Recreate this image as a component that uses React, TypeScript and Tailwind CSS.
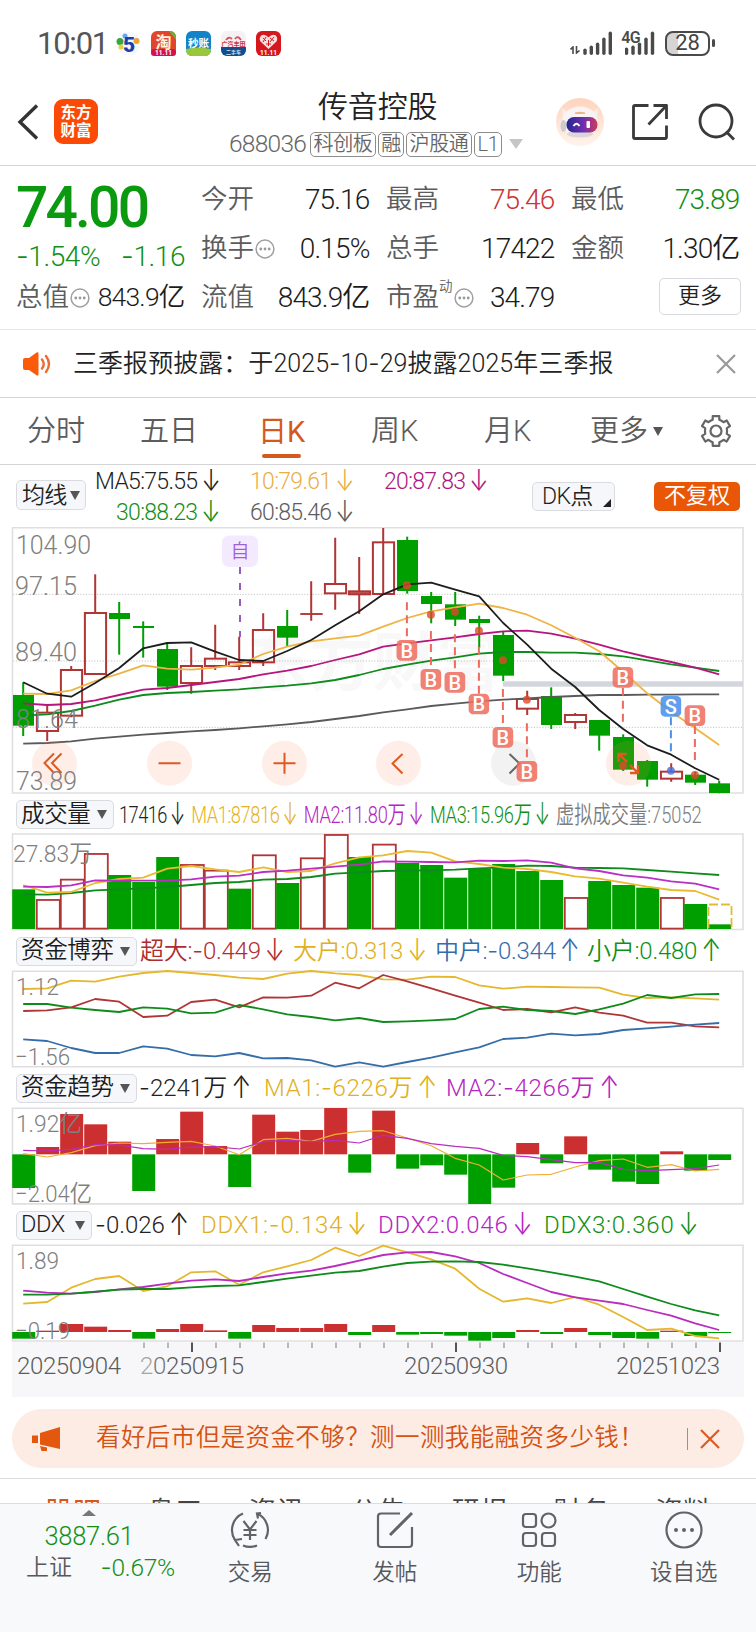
import React from 'react';

const RED = '#b03535';
const BARRED = '#cc2f2f';
const GREEN = '#009f00';
const cx = (i: number) => 23.2 + 24 * i;

function T({ t, className = '' }: { t: string; className?: string }) {
  return (
    <span className={`inline-block whitespace-nowrap tracking-[-0.03em] ${className}`}>
      {t.split(/([-↑↓])/).map((p, i) =>
        p === '-' ? (
          <span key={i} className="font-['Inter']">-</span>
        ) : p === '↑' || p === '↓' ? (
          <span key={i} className="ml-[4px] inline-block w-[16px] scale-y-[1.3] text-center font-['Inter'] font-light tracking-normal">{p}</span>
        ) : (
          p
        ),
      )}
    </span>
  );
}

function Line({ ys, base, color, w = 1.8 }: { ys: number[]; base: number; color: string; w?: number }) {
  return (
    <polyline
      fill="none"
      stroke={color}
      strokeWidth={w}
      strokeLinejoin="round"
      points={ys.map((y, i) => `${cx(i)},${(base + y / 3).toFixed(1)}`).join(' ')}
    />
  );
}

function Caret({ className = '' }: { className?: string }) {
  return (
    <svg viewBox="0 0 10 9" className={`h-[9px] w-[10px] shrink-0 ${className}`}>
      <path d="M0 0h10L5 9z" fill="currentColor" />
    </svg>
  );
}

function Lab({ x, y, len, children, size = 25 }: { x: number; y: number; len: number; size?: number; children: string }) {
  return (
    <text x={x} y={y} fontSize={size} textLength={len} lengthAdjust="spacingAndGlyphs" fill="#808080">
      {children}
    </text>
  );
}

function Frame({ top, bottom }: { top: number; bottom: number }) {
  return (
    <path
      d={`M12.5 ${top}H743V${bottom}H12.5z`}
      fill="none"
      stroke="#dfdfe1"
      strokeWidth="1.6"
    />
  );
}

const candles: [number, number, number, number, number][] = [
  [0, 525, 617, 487, 648], [1, 578, 633, 555, 663], [1, 450, 587, 438, 592], [1, 279, 462, 163, 462],
  [0, 279, 297, 246, 404], [0, 318, 324, 304, 413], [0, 387, 500, 369, 510], [1, 438, 489, 382, 521],
  [1, 416, 438, 314, 450], [1, 427, 438, 350, 450], [1, 330, 427, 280, 438], [0, 318, 353, 270, 379],
  [1, 281, 283, 184, 302], [1, 192, 220, 53, 269], [1, 214, 223, 111, 282], [1, 67, 222, 24, 67],
  [0, 60, 213, 50, 221], [0, 228, 252, 216, 310], [0, 253, 299, 216, 318], [0, 297, 309, 287, 383],
  [0, 345, 467, 333, 483], [1, 537, 566, 512, 585], [0, 528, 615, 502, 627], [1, 585, 606, 579, 627],
  [0, 600, 647, 600, 692], [0, 651, 749, 643, 753], [0, 723, 779, 720, 800], [1, 755, 776, 730, 785],
  [0, 764, 788, 755, 795], [0, 790, 819, 782, 820],
];
const ma5 = [487, 521, 530, 489, 444, 385, 369, 367, 395, 420, 423, 393, 360, 316, 274, 223, 193, 188, 209, 229, 309, 374, 446, 501, 570, 627, 676, 704, 745, 779];
const ma10 = [521, 522, 511, 483, 461, 436, 446, 449, 443, 434, 402, 380, 364, 355, 347, 320, 294, 274, 262, 251, 264, 284, 316, 353, 394, 455, 520, 575, 625, 675];
const ma20 = [550, 555, 552, 541, 525, 509, 504, 495, 486, 477, 463, 452, 438, 420, 403, 380, 370, 361, 352, 342, 334, 332, 341, 356, 374, 394, 411, 426, 443, 463];
const ma30 = [587, 583, 573, 557, 539, 525, 519, 516, 512, 508, 502, 497, 490, 480, 465, 447, 434, 422, 412, 401, 396, 396, 398, 398, 402, 409, 421, 433, 443, 453];
const ma60 = [671, 669, 664, 656, 650, 644, 639, 634, 630, 625, 619, 613, 606, 597, 588, 577, 568, 558, 551, 544, 539, 535, 531, 528, 525, 525, 524, 524, 523, 523];

// index, letter, badge centre, dash start, dash end, dot centre
const marks: [number, string, number, number, number, number][] = [
  [16, 'B', 391, 247, 360, 196], [17, 'B', 478, 333, 448, 284], [18, 'B', 487, 343, 457, 275],
  [19, 'B', 552, 380, 522, 332], [20, 'B', 652, 507, 620, 421], [21, 'B', 754, 610, 722, 539],
  [25, 'B', 472, 503, 615, 737], [27, 'S', 559, 592, 705, 752], [28, 'B', 587, 618, 735, 765],
];

function MainChart() {
  const Y = (v: number) => 520 + v / 3;
  return (
    <svg viewBox="0 525 756 272" className="block h-[272px] w-[756px]">
      <text x="246" y="685" fontSize="64" fontWeight="700" fill="#f8f8f8" textLength="254">东方财富</text>
      {[223, 423, 622].map((v) => (
        <path key={v} d={`M13 ${Y(v)}H743`} stroke="#c4c4c4" strokeWidth="1" strokeDasharray="1.2 1.6" />
      ))}
      <Frame top={527.7} bottom={793} />
      <rect x="503" y="681.3" width="240" height="5.4" fill="#d3d6dc" />
      {candles.map(([up, a, b, h, l], i) => {
        const x = cx(i);
        const c = up ? RED : GREEN;
        return (
          <g key={i}>
            <path d={up ? `M${x} ${Y(h)}V${Y(a)}M${x} ${Y(b)}V${Y(l)}` : `M${x} ${Y(h)}V${Y(l)}`} stroke={c} strokeWidth="2" />
            {up ? (
              <rect x={x - 10.3} y={Y(a)} width="21.2" height={Y(b) - Y(a)} fill="none" stroke={c} strokeWidth={i === 12 ? 1.2 : 2} />
            ) : (
              <rect x={x - 10.2} y={Y(a)} width="21" height={Y(b) - Y(a)} fill={c} />
            )}
          </g>
        );
      })}
      <rect x={cx(14) - 10} y={Y(214)} width="21" height="3" fill={RED} opacity=".8" />
      <Line ys={ma60} base={520} color="#5a5a5a" />
      <Line ys={ma30} base={520} color="#0f8a1c" />
      <Line ys={ma20} base={520} color="#b5157d" />
      <Line ys={ma10} base={520} color="#efb443" />
      <Line ys={ma5} base={520} color="#1d1d1d" />
      <path d="M240 567V637" stroke="#9a5cc4" strokeWidth="2" strokeDasharray="7 9" />
      <rect x="222" y="535.5" width="36" height="31.5" rx="7" fill="#f4eaff" />
      <text x="240" y="558" fontSize="19" textAnchor="middle" fill="#a25fd6">自</text>
      <Lab x={16} y={553.5} len={75}>104.90</Lab>
      <Lab x={15} y={594.5} len={62}>97.15</Lab>
      <Lab x={15} y={660.5} len={62}>89.40</Lab>
      <Lab x={16} y={727.5} len={62}>81.64</Lab>
      {[54.5, 169.5, 284.5, 398.5, 513.5, 628.5].map((x, i) => (
        <circle key={x} cx={x} cy="763.3" r="22.5" fill={i === 4 ? '#999' : '#f58a52'} opacity={i === 4 ? 0.13 : 0.14} />
      ))}
      <g fill="none" stroke="#dd5a22" strokeWidth="2">
        <path d="M54 753.5l-9.5 9.5 9.5 10M61.5 753.5l-9.5 9.5 9.5 10" />
        <path d="M158.500 763.300h22M273.500 763.300h22M284.500 752.800v21" />
        <path d="M402.500 754l-10 9.500 10 10" />
        <path d="M618.500 762v-8h8M619 754l8 8M638 765v8h-8M638 773l-8-8" strokeWidth="2.400" />
      </g>
      <path d="M509.500 754l10 9.500-10 10" fill="none" stroke="#666" strokeWidth="2" />
      <Lab x={16} y={789.5} len={61}>73.89</Lab>
      {marks.map(([i, s, by, y1, y2, dot]) => {
        const blue = s === 'S';
        const x = cx(i) - 0.3;
        return (
          <g key={i}>
            <path d={`M${x} ${Y(y1)}V${Y(y2)}`} stroke={blue ? '#4f8fe0' : '#ec6a5e'} strokeWidth="2" strokeDasharray="8 5" />
            <circle cx={x} cy={Y(dot)} r="4" fill={blue ? '#4a6fe0' : '#e2472c'} opacity=".8" />
            <rect x={x - 10.3} y={Y(by) - 10.3} width="20.6" height="20.6" rx="4.500" fill={blue ? '#4b92ec' : '#ee6f61'} opacity=".88" />
            <text x={x} y={Y(by) + 7.3} fontSize="20" fontWeight="500" textAnchor="middle" fill="#fff">{s}</text>
          </g>
        );
      })}
    </svg>
  );
}

const vol: [number, number][] = [
  [0, 268], [1, 299], [1, 238], [1, 161], [0, 225], [0, 246], [0, 171], [1, 194], [1, 211], [0, 266],
  [1, 165], [0, 249], [1, 174], [1, 104], [0, 171], [1, 133], [0, 189], [0, 195], [0, 233], [0, 206],
  [0, 192], [0, 213], [0, 240], [1, 293], [0, 243], [0, 255], [0, 263], [1, 293], [0, 312], [0, 373],
];
const v1 = [255, 278, 276, 249, 237, 233, 206, 198, 208, 216, 202, 216, 213, 190, 172, 166, 153, 158, 184, 192, 203, 207, 216, 229, 236, 248, 260, 270, 273, 299];
const v2 = [260, 261, 256, 241, 242, 242, 242, 238, 230, 227, 216, 212, 206, 200, 194, 184, 185, 186, 187, 182, 183, 181, 188, 205, 213, 226, 233, 244, 251, 268];
const v3 = [283, 284, 279, 271, 268, 265, 261, 255, 249, 246, 239, 237, 231, 221, 217, 213, 212, 211, 209, 205, 202, 197, 198, 203, 204, 205, 210, 215, 220, 225];

function VolumeChart() {
  return (
    <svg viewBox="0 832 756 100" className="block h-[100px] w-[756px]">
      <Frame top={834} bottom={929.5} />
      {vol.map(([up, y], i) =>
        up ? (
          <rect key={i} x={12.8 + 24 * i} y={800.3 + y / 3} width="23" height={128.3 - y / 3} fill="none" stroke={RED} strokeWidth="1.8" />
        ) : (
          <rect key={i} x={12.2 + 24 * i} y={800 + y / 3} width="23" height={129 - y / 3} fill={GREEN} />
        ),
      )}
      <path d="M708.500 928V904.500H731.500V928" fill="none" stroke="#e2bb35" strokeWidth="1.800" strokeDasharray="9 3" />
      <Line ys={v3} base={800} color="#0f8a1c" />
      <Line ys={v1} base={800} color="#e9bb32" />
      <Line ys={v2} base={800} color="#bb2fc4" />
      <Lab x={13} y={862} len={79} size={24}>27.83万</Lab>
    </svg>
  );
}

const g1 = [567, 565, 542, 545, 530, 519, 513, 519, 525, 533, 537, 521, 513, 520, 525, 538, 539, 530, 531, 556, 566, 560, 561, 562, 563, 584, 594, 592, 595, 599];
const g2 = [633, 631, 622, 597, 605, 651, 647, 606, 599, 622, 592, 593, 587, 548, 565, 525, 544, 565, 587, 608, 630, 627, 637, 622, 638, 647, 668, 668, 679, 682];
const g3 = [612, 612, 623, 630, 636, 622, 626, 640, 638, 615, 628, 643, 651, 661, 654, 666, 664, 661, 657, 627, 620, 630, 633, 642, 628, 611, 585, 594, 583, 582];
const g4 = [718, 723, 744, 759, 759, 739, 746, 765, 769, 759, 775, 774, 781, 800, 787, 800, 786, 773, 757, 742, 717, 713, 701, 706, 702, 690, 685, 680, 674, 669];

function FlowChart() {
  return (
    <svg viewBox="0 969 756 100" className="block h-[100px] w-[756px]">
      <Frame top={971.3} bottom={1066.7} />
      <Line ys={g1} base={800} color="#e5b72d" />
      <Line ys={g2} base={800} color="#b03535" />
      <Line ys={g3} base={800} color="#0f8a1c" />
      <Line ys={g4} base={800} color="#356da8" />
      <Lab x={16} y={995} len={43} size={24}>1.12</Lab>
      <Lab x={15} y={1065} len={55} size={24}>−1.56</Lab>
    </svg>
  );
}

const trend: [number, number][] = [
  [0, 324], [1, 201], [1, 102], [1, 133], [1, 185], [0, 333], [1, 177], [1, 95], [1, 198], [0, 321],
  [1, 104], [1, 155], [1, 150], [1, 84], [0, 278], [1, 92], [0, 266], [0, 256], [0, 284], [0, 372],
  [0, 323], [1, 189], [0, 250], [1, 169], [0, 269], [0, 305], [0, 312], [1, 214], [0, 272], [0, 240],
];
const t1 = [221, 231, 218, 197, 189, 191, 187, 184, 198, 224, 179, 175, 184, 163, 154, 152, 174, 197, 235, 255, 300, 285, 283, 261, 242, 237, 262, 254, 273, 268];
const t2 = [211, 213, 208, 194, 195, 206, 208, 201, 200, 207, 185, 181, 185, 181, 189, 166, 175, 191, 199, 205, 226, 230, 239, 248, 247, 268, 272, 269, 266, 255];

function Bars({ data, zero }: { data: [number, number][]; zero: number }) {
  return (
    <>
      {data.map(([up, v], i) => (
        <rect
          key={i}
          x={12.2 + 24 * i}
          y={1080 + Math.min(v, zero) / 3}
          width="23"
          height={Math.abs(v - zero) / 3}
          fill={up ? BARRED : GREEN}
        />
      ))}
    </>
  );
}

function TrendChart() {
  return (
    <svg viewBox="0 1106 756 100" className="block h-[100px] w-[756px]">
      <Frame top={1108.300} bottom={1203.900} />
      <Bars data={trend} zero={223} />
      <Line ys={t1} base={1080} color="#f0ae30" w={1.2} />
      <Line ys={t2} base={1080} color="#b92cc0" w={1.2} />
      <Lab x={16} y={1132} len={66} size={24}>1.92亿</Lab>
      <Lab x={15} y={1202} len={77} size={24}>−2.04亿</Lab>
    </svg>
  );
}

const ddx: [number, number][] = [
  [0, 776], [1, 752], [1, 732], [1, 740], [1, 750], [0, 776], [1, 747], [1, 732], [1, 751], [0, 776],
  [1, 735], [1, 744], [1, 744], [1, 732], [0, 765], [1, 735], [0, 764], [0, 762], [0, 767], [0, 782],
  [0, 774], [1, 750], [0, 762], [1, 744], [0, 765], [0, 774], [0, 776], [1, 752], [0, 768], [0, 759],
];
const d1 = [671, 666, 623, 597, 588, 633, 619, 577, 574, 614, 577, 559, 540, 503, 528, 497, 517, 538, 566, 626, 665, 655, 669, 651, 674, 711, 750, 746, 768, 775];
const d2 = [632, 638, 641, 636, 628, 621, 611, 602, 598, 603, 591, 580, 572, 558, 542, 525, 517, 516, 529, 549, 582, 609, 636, 652, 662, 672, 690, 707, 730, 750];
const d3 = [644, 644, 641, 635, 629, 627, 627, 622, 618, 616, 606, 596, 587, 578, 573, 560, 549, 545, 544, 546, 554, 565, 577, 590, 604, 627, 650, 672, 691, 706];

function DdxChart() {
  return (
    <svg viewBox="0 1243 756 154" className="block h-[154px] w-[756px]">
      <rect x="12" y="1342" width="732" height="55" fill="#f7f7fa" />
      <Frame top={1245.300} bottom={1341} />
      <Bars data={ddx} zero={756} />
      <Line ys={d1} base={1080} color="#e5b72d" />
      <Line ys={d2} base={1080} color="#b92cc0" />
      <Line ys={d3} base={1080} color="#0f8a1c" />
      <Lab x={16} y={1269} len={43} size={24}>1.89</Lab>
      <Lab x={15} y={1339} len={55} size={24}>−0.19</Lab>
      {Array.from({ length: 25 }, (_, k) => k + 5).map((i) => {
        const big = i === 7 || i === 18 || i === 29;
        return (
          <path key={i} d={`M${cx(i) + 0.8} 1342.500v${big ? 9.500 : 5.500}`} stroke={big ? '#555' : '#a8a8a8'} strokeWidth={big ? 2 : 1.600} />
        );
      })}
      <g fontSize="24" fill="#5c5c5c">
        <text x="17" y="1374" textLength="104">20250904</text>
        <text x="140" y="1374" textLength="104"><tspan fill="#a5a5a5">2</tspan><tspan fill="#777">0</tspan>250915</text>
        <text x="404" y="1374" textLength="104">20250930</text>
        <text x="616" y="1374" textLength="104">20251023</text>
      </g>
    </svg>
  );
}

function Pick({ t, className }: { t: string; className: string }) {
  return (
    <div className={`flex h-[29px] shrink-0 items-center justify-between rounded-[5px] border border-[#d9dbe0] bg-[#f6f7fa] pl-[4px] pr-[6px] text-[23.5px] text-[#1c1c1c] ${className}`}>
      <T t={t} className="!tracking-[-0.015em]" />
      <Caret className="text-[#555]" />
    </div>
  );
}

function Dots() {
  return (
    <svg viewBox="0 0 20 20" className="ml-[1px] h-[20px] w-[20px]">
      <circle cx="10" cy="10" r="8.900" fill="none" stroke="#a0a0a0" strokeWidth="1.500" />
      <g fill="#999"><circle cx="5.800" cy="10" r="1.400" /><circle cx="10" cy="10" r="1.400" /><circle cx="14.200" cy="10" r="1.400" /></g>
    </svg>
  );
}

function Cell({ k, v, dots, sup, className = '', vc = 'text-[#1c1c1c]', vs = 'text-[28px]' }: { k: string; v: string; dots?: boolean; sup?: string; className?: string; vc?: string; vs?: string }) {
  return (
    <div className={`flex h-[49px] items-center justify-between ${className}`}>
      <div className="flex items-center whitespace-nowrap text-[26.500px] text-[#5c5c5c]">
        {k}
        {sup && <span className="mb-[22px] text-[13.500px]">{sup}</span>}
        {dots && <Dots />}
      </div>
      <T t={v} className={`mr-[0.5px] ${vs} ${vc}`} />
    </div>
  );
}

function Tag({ t, className }: { t: string; className: string }) {
  return (
    <span className={`flex h-[25px] items-center justify-center whitespace-nowrap rounded-[5px] border-[1.500px] border-[#8c8c8c] text-[20px] tracking-[-0.02em] ${className}`}>{t}</span>
  );
}

export default function App() {
  return (
    <div className="flex h-[1632px] w-[756px] flex-col overflow-hidden bg-white font-['Roboto','Noto_Sans_CJK_SC',sans-serif] font-[350] leading-none text-[#222]">
      {/* status bar */}
      <div className="flex h-[86px] items-center pl-[37px] pr-[41px]">
        <T t="10:01" className="w-[79px] text-[31px] font-normal !tracking-[-0.04em] text-[#555]" />
        <div className="flex gap-[10px]">
          <svg viewBox="0 0 25 25" className="h-[25px] w-[25px]">
            <circle cx="12.500" cy="12.500" r="12" fill="#f7f8fc" />
            <circle cx="4" cy="10.500" r="3.500" fill="#35a83c" />
            <circle cx="9" cy="5" r="2.500" fill="#6aa5ef" />
            <circle cx="20.500" cy="10" r="3" fill="#f0a12c" />
            <circle cx="5" cy="16" r="2.500" fill="#e5d23a" />
            <text x="13" y="20.500" fontSize="21" fontWeight="900" textAnchor="middle" fill="#1c3fae">5</text>
          </svg>
          <svg viewBox="0 0 25 25" className="h-[25px] w-[25px]">
            <rect width="25" height="25" rx="6" fill="#e2452e" />
            <path d="M18 0h1a6 6 0 0 1 6 6v3z" fill="#6fae3a" />
            <rect y="18" width="25" height="7" rx="3" fill="#d3124e" />
            <text x="12.500" y="17" fontSize="16" fontWeight="700" textAnchor="middle" fill="#fff3d8">淘</text>
            <text x="12.500" y="24" fontSize="6.500" fontWeight="700" textAnchor="middle" fill="#fff">11.11</text>
          </svg>
          <svg viewBox="0 0 25 25" className="h-[25px] w-[25px]">
            <rect width="25" height="25" rx="6" fill="#1283c6" />
            <path d="M0 18Q12 15 25 18v1a6 6 0 0 1-6 6H6a6 6 0 0 1-6-6z" fill="#9ac63c" />
            <text x="12.500" y="15.500" fontSize="10.500" fontWeight="700" textAnchor="middle" fill="#fff">秒账</text>
          </svg>
          <svg viewBox="0 0 25 25" className="h-[25px] w-[25px]">
            <rect width="25" height="25" rx="6" fill="#f4f2f3" />
            <path d="M0 16h25v3a6 6 0 0 1-6 6H6a6 6 0 0 1-6-6z" fill="#124d8c" />
            <path d="M5 9q3-4 6-1M14 8q3-4 6 1" stroke="#d4545a" strokeWidth="1.800" fill="none" />
            <text x="12.500" y="14.500" fontSize="6" fontWeight="700" textAnchor="middle" fill="#c8323c">广汽丰田</text>
            <text x="12.500" y="22.500" fontSize="5" fontWeight="700" textAnchor="middle" fill="#dbe8f5">二手车</text>
          </svg>
          <svg viewBox="0 0 25 25" className="h-[25px] w-[25px]">
            <rect width="25" height="25" rx="6" fill="#d5161d" />
            <path d="M12.500 18L4.500 10.500C2 6.500 6 2 10 4.500l2.500 1.800L15 4.500c4-2.500 8 2 5.500 6z" fill="#f8dcdc" />
            <path d="M7 7l3 3M10 6l-3 5M14 7l4 3M18 6l-4 5M12.500 9v6M10 13h5" stroke="#d5161d" strokeWidth="1" />
            <text x="12.500" y="23.500" fontSize="6.500" fontWeight="700" textAnchor="middle" fill="#fff">11.11</text>
          </svg>
        </div>
        <div className="ml-auto flex items-center">
          <svg viewBox="0 0 10 8" className="mt-[14px] h-[8px] w-[10px]" fill="none" stroke="#4a4a4a" strokeWidth="1.600">
            <path d="M3 8V1L.5 3.500M6.500 0v7L9.500 4.500" />
          </svg>
          <svg viewBox="0 0 30 24" className="ml-[3px] h-[24px] w-[30px]">
            {[[2, 6], [8.300, 9], [14.600, 12], [20.900, 17], [27.300, 23]].map(([x, h]) => (
              <path key={x} d={`M${x} 22.300v-${h - 3}`} stroke="#4a4a4a" strokeWidth="3.400" strokeLinecap="round" />
            ))}
          </svg>
          <div className="ml-[11px] flex items-center">
            <span className="-mr-[15px] mb-[11px] ml-[-3px] text-[16px] font-semibold tracking-[-0.04em] text-[#4a4a4a]">4G</span>
            <svg viewBox="0 0 30 24" className="h-[24px] w-[30px]">
              {[[1.500, 7], [8, 9], [14.500, 12], [21, 17], [27.500, 23]].map(([x, h]) => (
                <path key={x} d={`M${x} 22.300v-${h - 3}`} stroke="#4a4a4a" strokeWidth="3.400" strokeLinecap="round" />
              ))}
            </svg>
          </div>
          <div className="ml-[10px] flex h-[25px] w-[45px] items-center justify-center rounded-[8px] border-2 border-[#4a4a4a] bg-linear-to-r from-[#d5d5d5] from-28% to-white to-28% text-[22px] font-normal text-[#444]">28</div>
          <div className="ml-[2px] h-[8px] w-[3px] rounded bg-[#4a4a4a]" />
        </div>
      </div>

      {/* title bar */}
      <div className="flex h-[80px] items-start border-b-[1.500px] border-[#d4d4d6] pl-[17px] pr-[20px]">
        <svg viewBox="0 0 22 36" className="mt-[18px] h-[36px] w-[22px]">
          <path d="M20 1.500L3 18l17 16.500" fill="none" stroke="#333" strokeWidth="3.400" />
        </svg>
        <div className="ml-[15px] mt-[13px] flex h-[45px] w-[44px] flex-col items-center justify-center rounded-[9px] bg-[#fb4a05] text-[15.500px] font-bold leading-[18px] text-white">
          <span>东方</span><span>财富</span>
        </div>
        <div className="ml-[131px] flex w-[295px] flex-col">
          <div className="pl-[89px] pt-[5px] text-[30px] leading-[32px] tracking-[-0.005em]">传音控股</div>
          <div className="mt-[8px] flex h-[26px] items-center text-[#666]">
            <T t="688036" className="w-[81px] text-[24.500px]" />
            <Tag t="科创板" className="w-[66px]" />
            <Tag t="融" className="ml-[2px] w-[26px]" />
            <Tag t="沪股通" className="ml-[2px] w-[66px]" />
            <Tag t="L1" className="ml-[2px] w-[28px]" />
            <svg viewBox="0 0 14 10" className="ml-[7px] h-[10px] w-[14px]"><path d="M0 0h14L7 10z" fill="#c6c6c8" /></svg>
          </div>
        </div>
        <div className="ml-auto mt-[12px] flex items-center">
          <svg viewBox="0 0 48 48" className="h-[48px] w-[48px]">
            <defs>
              <linearGradient id="halo" x1="0" y1="0" x2="0" y2="1"><stop offset="0" stopColor="#ffd3bd" /><stop offset="1" stopColor="#fff3ec" /></linearGradient>
              <linearGradient id="visor"><stop offset="0" stopColor="#24278f" /><stop offset=".55" stopColor="#6f2fb0" /><stop offset="1" stopColor="#d03a5a" /></linearGradient>
            </defs>
            <circle cx="24" cy="24" r="24" fill="url(#halo)" />
            <path d="M6 10l6 5-5 4zM42 10l-6 5 5 4z" fill="#f3efee" />
            <ellipse cx="24" cy="24" rx="18" ry="15.500" fill="#f7f4f3" />
            <ellipse cx="7.500" cy="28" rx="3" ry="6" fill="#cfcad0" />
            <ellipse cx="24" cy="36" rx="13" ry="3.500" fill="#dcd6da" />
            <path d="M19 14.500q5-1.500 10 0v1.500H19z" fill="#eeb484" />
            <rect x="10.500" y="19" width="31" height="15.500" rx="7.500" fill="url(#visor)" />
            <path d="M17.500 28q3-4.500 6 0" fill="none" stroke="#fff" strokeWidth="2" />
            <rect x="30.500" y="23" width="3.500" height="7" rx="1" fill="#fff" />
          </svg>
          <svg viewBox="0 0 38 38" className="ml-[27px] h-[38px] w-[38px]" fill="none" stroke="#3a3a3a" strokeWidth="2.800" strokeLinejoin="round">
            <path d="M17.500 2.500H4a1.500 1.500 0 0 0-1.500 1.500V34A1.500 1.500 0 0 0 4 35.500H34a1.500 1.500 0 0 0 1.500-1.500V22.500M22.500 2.500h13V16M35 3L17.500 21.500" />
          </svg>
          <svg viewBox="0 0 38 38" className="ml-[29px] h-[38px] w-[38px]" fill="none" stroke="#3a3a3a" strokeWidth="2.800">
            <circle cx="18" cy="18" r="16" /><path d="M28 30l8 8" transform="translate(0 -1.500)" />
          </svg>
        </div>
      </div>

      {/* quote */}
      <div className="flex h-[164px] border-b border-[#e8e8ea] pl-[16px]">
        <div className="flex w-[169px] flex-col">
          <div className="h-[58px] pt-[15px] text-[57px] font-medium leading-[54px] tracking-[-0.05em] text-[#0b9a0f]">74.00</div>
          <div className="flex h-[49px] items-end justify-between pb-[2px] text-[28px] text-[#128f16]">
            <T t="-1.54%" className="!tracking-[-0.015em]" /><T t="-1.16" className="!tracking-[-0.015em]" />
          </div>
          <Cell k="总值" v="843.9亿" dots vs="text-[26.500px]" />
        </div>
        <div className="ml-[16px] mt-[9px] w-[169px]">
          <Cell k="今开" v="75.16" />
          <Cell k="换手" v="0.15%" dots />
          <Cell k="流值" v="843.9亿" />
        </div>
        <div className="ml-[16px] mt-[9px] w-[169px]">
          <Cell k="最高" v="75.46" vc="text-[#cc3434]" />
          <Cell k="总手" v="17422" />
          <Cell k="市盈" v="34.79" sup="动" dots />
        </div>
        <div className="ml-[16px] mt-[9px] w-[169px]">
          <Cell k="最低" v="73.89" vc="text-[#128f16]" />
          <Cell k="金额" v="1.30亿" />
          <div className="-mr-[1px] ml-auto mt-[5px] flex h-[37px] w-[82px] items-center justify-center rounded-[5px] border-[1.500px] border-[#d8dadf] pb-[2px] text-[22px]">更多</div>
        </div>
      </div>

      {/* notice */}
      <div className="flex h-[68px] items-center border-b-[1.500px] border-[#d4d4d6] pl-[22px] pr-[20px]">
        <svg viewBox="0 0 30 24" className="h-[24px] w-[30px]">
          <path d="M1 8q0-2 2-2h4L14.500.6q2-1 2 1V22.300q0 2-2 1L7 18H3q-2 0-2-2z" fill="#fb5a0a" />
          <path d="M20 7.500q3.500 4.500 0 9M24 4q6 8 0 16" fill="none" stroke="#ee6a30" strokeWidth="2.400" strokeLinecap="round" />
        </svg>
        <div className="ml-[21px] flex text-[25px]">
          <T t="三季报预披露：于2025-10-29披露2025年三季报" className="!tracking-[0.002em]" />
        </div>
        <svg viewBox="0 0 20 20" className="ml-auto h-[20px] w-[20px]"><path d="M1 1l18 18M19 1L1 19" stroke="#999" strokeWidth="2.200" /></svg>
      </div>

      {/* tabs */}
      <div className="flex h-[67px] items-center border-b-[1.500px] border-[#d4d4d6] pl-[27px] text-[29px] text-[#5c5c5c]">
        <span className="w-[113px]">分时</span>
        <span className="w-[118px]">五日</span>
        <span className="flex w-[113px] flex-col font-normal text-[#d35a1e]">
          <span className="mt-[13px]">日K</span>
          <span className="ml-[4px] mt-[7px] h-[4px] w-[39px] rounded bg-[#d35a1e]" />
        </span>
        <span className="w-[113px]">周K</span>
        <span className="w-[106px]">月K</span>
        <span>更多</span>
        <Caret className="ml-[5px] text-[#555]" />
        <svg viewBox="0 0 32 32" className="ml-[37px] h-[32px] w-[32px]" fill="none" stroke="#666" strokeWidth="2.200" strokeLinejoin="round">
          <path d="M12.700 1.200h6.600v3.600q2.300.8 4.200 2.400l3.200-1.700 3.300 5.600-3.200 2q.5 2.900 0 5.800l3.200 2-3.300 5.600-3.200-1.700q-1.900 1.600-4.200 2.400v3.600h-6.600v-3.600q-2.300-.8-4.200-2.400l-3.200 1.700L2 20.900l3.200-2q-.5-2.900 0-5.800l-3.200-2 3.300-5.600 3.200 1.700q1.900-1.600 4.200-2.400z" />
          <circle cx="16" cy="16" r="5.500" />
        </svg>
      </div>

      {/* moving averages */}
      <div className="flex h-[60px] items-start pl-[16px]">
        <div className="mt-[15px] flex h-[30px] w-[70px] items-center justify-between rounded-[5px] border border-[#d9dbe0] bg-[#f6f7fa] pl-[5px] pr-[5px] text-[23px]"><T t="均线" /><Caret className="text-[#555]" /></div>
        <div className="ml-[9px] grid w-[400px] grid-cols-[155px_134px_1fr] pt-[1px] text-[23px] leading-[31px]">
          <T t="MA5:75.55↓" />
          <T t="10:79.61↓" className="text-[#eaae45]" />
          <T t="20:87.83↓" className="text-[#ae1682]" />
          <T t="30:88.23↓" className="pl-[21px] text-[#128f16]" />
          <T t="60:85.46↓" className="text-[#5c5c5c]" />
        </div>
        <div className="relative ml-[37px] mt-[17px] flex h-[29px] w-[83px] items-center rounded-[5px] border border-[#d9dbe0] bg-[#f6f7fa] pl-[9px] text-[23px]">
          <T t="DK点" />
          <svg viewBox="0 0 8 8" className="absolute bottom-[3px] right-[3px] h-[8px] w-[8px]"><path d="M8 0v8H0z" fill="#222" /></svg>
        </div>
        <div className="ml-[39px] mt-[17px] flex h-[29px] w-[86px] items-center justify-center rounded-[5px] bg-[#e95606] pb-[2px] text-[22px] font-normal text-white">不复权</div>
      </div>

      <MainChart />

      <div className="flex h-[35px] items-center pl-[16px]">
        <Pick t="成交量" className="w-[98px]" />
        <div className="ml-[5px] flex origin-left scale-x-[0.76] items-center gap-[12px] text-[24px]">
          <T t="17416↓" />
          <T t="MA1:87816↓" className="!tracking-[-0.022em] text-[#e5b325]" />
          <T t="MA2:11.80万↓" className="!tracking-[-0.014em] text-[#b525bf]" />
          <T t="MA3:15.96万↓" className="!tracking-[-0.014em] text-[#128f16]" />
          <T t="虚拟成交量:75052" className="!tracking-[0em] text-[#7d7d7d]" />
        </div>
      </div>
      <VolumeChart />

      <div className="flex h-[37px] items-center pl-[16px] pt-[1px] text-[24px]">
        <Pick t="资金博弈" className="w-[121px]" />
        <T t="超大:-0.449↓" className="ml-[3px] w-[153px] !tracking-[-0.01em] text-[#b02c2c]" />
        <T t="大户:0.313↓" className="w-[142px] !tracking-[-0.01em] text-[#e0b022]" />
        <T t="中户:-0.344↑" className="w-[152px] !tracking-[-0.01em] text-[#336cac]" />
        <T t="小户:0.480↑" className="!tracking-[-0.01em] text-[#128f16]" />
      </div>
      <FlowChart />

      <div className="flex h-[37px] items-center pl-[16px] pt-[1px] text-[24px]">
        <Pick t="资金趋势" className="w-[121px]" />
        <T t="-2241万↑" className="ml-[2px] w-[125px] !tracking-[0em]" />
        <T t="MA1:-6226万↑" className="w-[182px] !tracking-[0.028em] text-[#e0b022]" />
        <T t="MA2:-4266万↑" className="!tracking-[0.028em] text-[#b525bf]" />
      </div>
      <TrendChart />

      <div className="flex h-[37px] items-center pl-[16px] pt-[1px] text-[24px]">
        <Pick t="DDX" className="w-[76px]" />
        <T t="-0.026↑" className="ml-[3px] w-[106px] !tracking-[0em]" />
        <T t="DDX1:-0.134↓" className="w-[177px] !tracking-[0.03em] text-[#e0b022]" />
        <T t="DDX2:0.046↓" className="w-[166px] !tracking-[0.03em] text-[#b525bf]" />
        <T t="DDX3:0.360↓" className="!tracking-[0.03em] text-[#128f16]" />
      </div>
      <DdxChart />

      {/* promo */}
      <div className="mx-[12px] mt-[12px] flex h-[59px] shrink-0 items-center rounded-full bg-[#fdece3] pl-[19px] pr-[24px]">
        <svg viewBox="0 0 30 26" className="h-[26px] w-[32px]">
          <path d="M8 7L28 1v22L8 18.500z" fill="#e4570f" /><path d="M0 9.500h6V17H0z" fill="#e4570f" /><path d="M8 20l7 1.600V25H9.500z" fill="#e4570f" />
        </svg>
        <span className="ml-[33px] whitespace-nowrap text-[24.500px] tracking-[0.017em] text-[#d35214]">看好后市但是资金不够？测一测我能融资多少钱！</span>
        <span className="ml-auto h-[22px] w-[1.500px] bg-[#dd7a50]" />
        <svg viewBox="0 0 20 20" className="ml-[12px] h-[20px] w-[20px]"><path d="M1 1l18 18M19 1L1 19" stroke="#dd5a22" strokeWidth="2.200" /></svg>
      </div>

      {/* section tabs */}
      <div className="mt-[10px] flex h-[25px] shrink-0 justify-between overflow-hidden border-t border-[#dcdcde] px-[45px] pt-[20px] text-[28px] text-[#444]">
        <span className="font-normal text-[#d35a1e]">股吧</span><span>盘口</span><span>资讯</span><span>公告</span><span>研报</span><span>财务</span><span>资料</span>
      </div>

      {/* bottom bar */}
      <div className="flex h-[129px] shrink-0 border-t border-[#dcdde0] bg-[#f8f9fb] text-[#55585d]">
        <div className="flex w-[178px] flex-col items-center">
          <svg viewBox="0 0 14 6" className="mt-[6px] h-[6px] w-[14px]"><path d="M0 6h14L7 0z" fill="#777" /></svg>
          <T t="3887.61" className="mt-[8px] text-[25.500px] !tracking-[-0.01em] text-[#128f16]" />
          <div className="mt-[5px] flex w-full items-center justify-between pl-[26px] pr-[3px]">
            <span className="text-[23px]">上证</span>
            <T t="-0.67%" className="text-[24.500px] !tracking-[-0.01em] text-[#128f16]" />
          </div>
        </div>
        <div className="grid flex-1 grid-cols-4 text-[22.500px]">
          <div className="flex flex-col items-center pt-[6px]">
            <svg viewBox="0 0 42 40" className="h-[40px] w-[42px]" fill="none" stroke="#606368" strokeWidth="2.200">
              <path d="M6 30A18 18 0 0 1 14 3.500M28 3.500A18 18 0 0 1 36.500 29M14 35.500a18 18 0 0 0 14 0M10 36l-4-6 7-1M32 3l-4 .5 1 5" />
              <path d="M14.500 11l6.500 8.500L27.500 11M21 19.500V30M14.500 20h13M14.500 25h13" />
            </svg>
            <span className="mt-[11px]">交易</span>
          </div>
          <div className="flex flex-col items-center pt-[6px]">
            <svg viewBox="0 0 42 40" className="h-[40px] w-[42px]" fill="none" stroke="#606368" strokeWidth="2.200">
              <path d="M26 3.500H7q-3 0-3 3V34q0 3 3 3h28q3 0 3-3V17" /><path d="M16 25L38 3" strokeWidth="3" />
            </svg>
            <span className="mt-[11px]">发帖</span>
          </div>
          <div className="flex flex-col items-center pt-[6px]">
            <svg viewBox="0 0 42 40" className="h-[40px] w-[42px]" fill="none" stroke="#606368" strokeWidth="2.200">
              <rect x="5" y="4" width="13" height="13" rx="3" /><rect x="5" y="23" width="13" height="13" rx="3" /><rect x="24" y="23" width="13" height="13" rx="3" /><circle cx="30.500" cy="10.500" r="7" />
            </svg>
            <span className="mt-[11px]">功能</span>
          </div>
          <div className="flex flex-col items-center pt-[6px]">
            <svg viewBox="0 0 42 40" className="h-[40px] w-[42px]" fill="none" stroke="#606368" strokeWidth="2.200">
              <circle cx="21" cy="20" r="17.500" /><g fill="#606368" stroke="none"><circle cx="13" cy="20" r="2" /><circle cx="21" cy="20" r="2" /><circle cx="29" cy="20" r="2" /></g>
            </svg>
            <span className="mt-[11px]">设自选</span>
          </div>
        </div>
      </div>
    </div>
  );
}
